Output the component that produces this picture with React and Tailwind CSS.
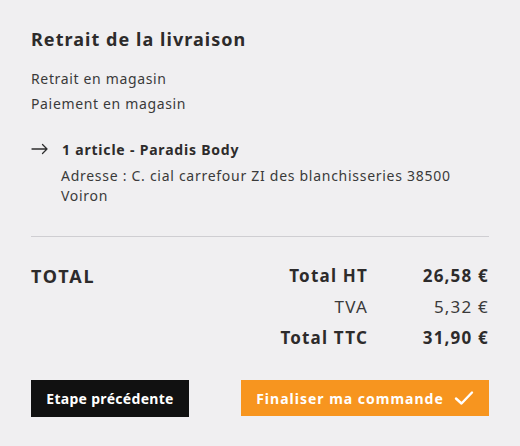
import React from 'react';

const Check = () => (
    <svg width="20" height="16" viewBox="0 0 20 16" fill="none" className="ml-[10px]">
        <path d="M2 8.5 L7.5 13.5 L18 2.5" stroke="white" strokeWidth="2.4" strokeLinecap="round" strokeLinejoin="round" />
    </svg>
);

const Arrow = () => (
    <svg width="18" height="12" viewBox="0 0 18 12" fill="none">
        <path d="M1 6 H16 M11.5 1.5 L16 6 L11.5 10.5" stroke="#2e2e2e" strokeWidth="1.3" strokeLinecap="round" strokeLinejoin="round" />
    </svg>
);

const App = () => {
    return (
        <div className="w-[520px] h-[446px] bg-[#f0eff1] text-[#2d2b2b] font-['Noto_Sans',sans-serif] px-[31px] pt-[26px]">
            <h2 className="text-[18px] leading-[26px] font-bold tracking-[1.05px]">Retrait de la livraison</h2>

            <div className="mt-[14px] text-[14px] leading-[25px] tracking-[0.65px] text-[#3a3a3a]">
                <p>Retrait en magasin</p>
                <p>Paiement en magasin</p>
            </div>

            <div className="mt-[23px]">
                <div className="flex items-center h-[20px]">
                    <Arrow />
                    <span className="ml-[13px] text-[14px] font-bold tracking-[0.8px]">1 article - Paradis Body</span>
                </div>
                <p className="mt-[7px] ml-[30px] text-[14px] leading-[20px] tracking-[0.72px] text-[#3a3a3a]">
                    Adresse : C. cial carrefour ZI des blanchisseries 38500<br />Voiron
                </p>
            </div>

            <div className="mt-[30px] border-t border-[#cfced2]"></div>

            <div className="mt-[27px] flex">
                <div className="flex-1 text-[18px] leading-[24px] font-bold tracking-[1.8px]">TOTAL</div>
                <div className="grid grid-cols-[auto_121px] gap-y-[7px] text-[17px] leading-[24px] tracking-[1.2px]">
                    <div className="text-right font-bold">Total HT</div>
                    <div className="text-right font-bold">26,58 €</div>
                    <div className="text-right text-[#3a3a3a]">TVA</div>
                    <div className="text-right text-[#3a3a3a]">5,32 €</div>
                    <div className="text-right font-bold">Total TTC</div>
                    <div className="text-right font-bold">31,90 €</div>
                </div>
            </div>

            <div className="mt-[30px] flex justify-between items-start">
                <button className="h-[37px] w-[158px] bg-[#111111] text-white text-[14px] font-bold tracking-[0.3px]">
                    Etape précédente
                </button>
                <button className="h-[36px] w-[248px] bg-[#f7951f] text-white text-[14px] font-bold tracking-[1px] flex items-center justify-center">
                    Finaliser ma commande
                    <Check />
                </button>
            </div>
        </div>
    );
};

export default App;
